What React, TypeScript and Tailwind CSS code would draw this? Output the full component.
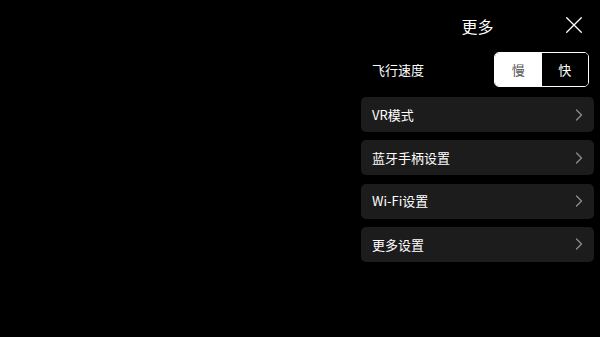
import React, { useState } from 'react';

const items = ['VR模式', '蓝牙手柄设置', 'Wi-Fi设置', '更多设置'];

const Chevron = () => (
  <svg width="8" height="12" viewBox="0 0 8 12" fill="none">
    <path d="M1.5 1 L6.5 6 L1.5 11" stroke="#8a8a8a" strokeWidth="1.4" strokeLinecap="round" strokeLinejoin="round" />
  </svg>
);

const App = () => {
  const [speed, setSpeed] = useState<'slow' | 'fast'>('slow');

  return (
    <div
      className="w-[600px] h-[337px] bg-black flex justify-end overflow-hidden"
      style={{ fontFamily: '"Noto Sans CJK SC", "Noto Sans", sans-serif' }}
    >
      <div className="w-[233px] mr-[6px] flex flex-col">
        <div className="h-[52px] flex items-center relative">
          <span className="w-full text-center text-white text-[16px] pb-[1px]">更多</span>
          <button className="absolute right-[12px] top-[17px]">
            <svg width="16" height="16" viewBox="0 0 16 16" fill="none">
              <path d="M0.7 0.7 L15.3 15.3 M15.3 0.7 L0.7 15.3" stroke="#ffffff" strokeWidth="1.3" strokeLinecap="round" />
            </svg>
          </button>
        </div>
        <div className="flex items-center justify-between h-[35px] pl-[11px] pr-[5px]">
          <span className="text-white text-[13px]">飞行速度</span>
          <div className="flex w-[95px] h-[35px] border-[1.5px] border-white rounded-[5px] overflow-hidden">
            <button
              onClick={() => setSpeed('slow')}
              className={`flex-1 text-[13px] flex items-center justify-center ${
                speed === 'slow' ? 'bg-white text-[#555]' : 'bg-black text-white'
              }`}
            >
              慢
            </button>
            <button
              onClick={() => setSpeed('fast')}
              className={`flex-1 text-[13px] flex items-center justify-center ${
                speed === 'fast' ? 'bg-white text-[#555]' : 'bg-black text-white'
              }`}
            >
              快
            </button>
          </div>
        </div>
        <div className="mt-[10px] flex flex-col gap-[8.3px]">
          {items.map((item) => (
            <div
              key={item}
              className="h-[35px] bg-[#1c1c1c] rounded-[5px] flex items-center justify-between pl-[11px] pr-[11px]"
            >
              <span className="text-white text-[13px]">{item}</span>
              <Chevron />
            </div>
          ))}
        </div>
      </div>
    </div>
  );
};

export default App;
